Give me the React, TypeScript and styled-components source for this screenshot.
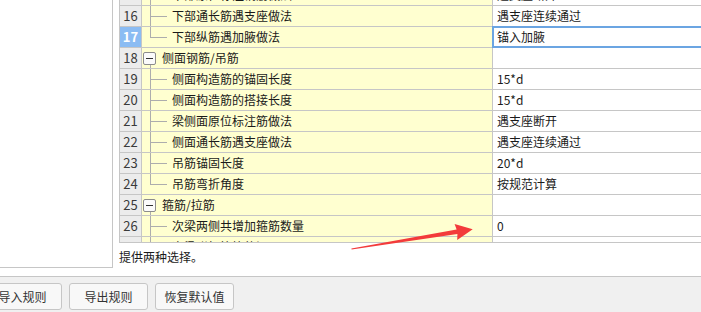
import * as React from 'react';
import styled, { createGlobalStyle, css } from 'styled-components';

const LINE_COLOR = '#c6c6c6';
const TREE_LINE = '#adadad';
const YELLOW = '#ffffd0';
const FONT = '"Noto Sans CJK SC", "Noto Sans", sans-serif';

const GlobalStyle = createGlobalStyle`
  html, body {
    margin: 0;
    padding: 0;
    background: #fff;
    overflow: hidden;
  }
  body {
    font-family: ${FONT};
    font-size: 12px;
    color: #1a1a1a;
  }
`;

const Page = styled.div`
  position: relative;
  width: 701px;
  height: 312px;
  display: flex;
  flex-direction: column;
  overflow: hidden;
`;

const Main = styled.div`
  display: flex;
  height: 277px;
  box-sizing: border-box;
  border-bottom: 1px solid ${LINE_COLOR};
`;

const LeftPanel = styled.div`
  width: 113px;
  height: 268px;
  box-sizing: border-box;
  background: #fff;
  border-right: 1px solid ${LINE_COLOR};
  border-bottom: 1px solid ${LINE_COLOR};
`;

const RightPane = styled.div`
  flex: 1;
  margin-left: 6px;
  display: flex;
  flex-direction: column;
  min-width: 0;
`;

const GridViewport = styled.div`
  position: relative;
  height: 243px;
  box-sizing: border-box;
  border-left: 1px solid ${LINE_COLOR};
  border-bottom: 1px solid ${LINE_COLOR};
  overflow: hidden;
`;

// scrolled so that row 15 is mostly out of view
const Rows = styled.div`
  margin-top: -15px;
`;

const Row = styled.div`
  display: flex;
  height: 21px;
  line-height: 20px;
`;

const NumCell = styled.div<{ $active?: boolean }>`
  width: 22px;
  flex: none;
  box-sizing: border-box;
  border-right: 1px solid ${LINE_COLOR};
  border-bottom: 1px solid ${LINE_COLOR};
  background: ${p => (p.$active ? '#8bbcf3' : '#ececec')};
  color: ${p => (p.$active ? '#fff' : '#3a3a3a')};
  font-weight: ${p => (p.$active ? 700 : 400)};
  font-size: 13px;
  text-align: center;
`;

type Kind = 'child' | 'last' | 'group';

const TreeCell = styled.div<{ $kind: Kind }>`
  position: relative;
  width: 351px;
  flex: none;
  box-sizing: border-box;
  border-right: 1px solid ${LINE_COLOR};
  border-bottom: 1px solid ${LINE_COLOR};
  background: ${YELLOW};
  padding-left: ${p => (p.$kind === 'group' ? 20 : 30)}px;
  white-space: nowrap;
  overflow: hidden;

  &::before {
    content: '';
    position: absolute;
    left: 8px;
    width: 1px;
    background: ${TREE_LINE};
    ${p =>
      p.$kind === 'child' &&
      css`
        top: 0;
        bottom: -1px;
      `}
    ${p =>
      p.$kind === 'last' &&
      css`
        top: 0;
        height: 10px;
      `}
    ${p =>
      p.$kind === 'group' &&
      css`
        top: 17px;
        bottom: -1px;
      `}
  }

  &::after {
    content: '';
    display: ${p => (p.$kind === 'group' ? 'none' : 'block')};
    position: absolute;
    left: 8px;
    top: 10px;
    width: 17px;
    height: 1px;
    background: ${TREE_LINE};
  }
`;

const Toggle = styled.span`
  position: absolute;
  left: 1px;
  top: 4px;
  width: 13px;
  height: 13px;
  box-sizing: border-box;
  border: 1px solid #8c8c8c;
  border-radius: 2px;
  background: #fbfbfb;

  &::after {
    content: '';
    position: absolute;
    left: 2px;
    right: 2px;
    top: 5px;
    height: 1px;
    background: #333;
  }
`;

const ValueCell = styled.div<{ $focused?: boolean }>`
  position: relative;
  flex: 1;
  box-sizing: border-box;
  border-bottom: 1px solid ${LINE_COLOR};
  background: #fff;
  padding-left: 4px;
  white-space: nowrap;

  ${p =>
    p.$focused &&
    css`
      &::after {
        content: '';
        position: absolute;
        left: -1px;
        right: -4px;
        top: -1px;
        bottom: -1px;
        border: 2px solid #6ba5e2;
      }
    `}
`;

const Hint = styled.div`
  margin-top: 6px;
  line-height: 16px;
  color: #1a1a1a;
`;

const BottomBar = styled.div`
  flex: 1;
  background: #f0f0f0;
  display: flex;
  gap: 7px;
  padding-top: 6px;
  margin-left: -17px;
`;

const Button = styled.button`
  width: 79px;
  height: 27px;
  box-sizing: border-box;
  border: 1px solid #c6c6c6;
  border-radius: 3px;
  background: #f8f8f8;
  font-family: ${FONT};
  font-size: 12px;
  color: #333;
  padding: 0;
`;

const Arrow = styled.svg`
  position: absolute;
  left: 350px;
  top: 220px;
  width: 126px;
  height: 32px;
  pointer-events: none;
`;

type Item = { no: number; label: string; value?: string; kind: Kind };

const items: Item[] = [
  { no: 15, label: '下部原位标注钢筋做法', value: '遇支座断开', kind: 'child' },
  { no: 16, label: '下部通长筋遇支座做法', value: '遇支座连续通过', kind: 'child' },
  { no: 17, label: '下部纵筋遇加腋做法', value: '锚入加腋', kind: 'last' },
  { no: 18, label: '侧面钢筋/吊筋', kind: 'group' },
  { no: 19, label: '侧面构造筋的锚固长度', value: '15*d', kind: 'child' },
  { no: 20, label: '侧面构造筋的搭接长度', value: '15*d', kind: 'child' },
  { no: 21, label: '梁侧面原位标注筋做法', value: '遇支座断开', kind: 'child' },
  { no: 22, label: '侧面通长筋遇支座做法', value: '遇支座连续通过', kind: 'child' },
  { no: 23, label: '吊筋锚固长度', value: '20*d', kind: 'child' },
  { no: 24, label: '吊筋弯折角度', value: '按规范计算', kind: 'last' },
  { no: 25, label: '箍筋/拉筋', kind: 'group' },
  { no: 26, label: '次梁两侧共增加箍筋数量', value: '0', kind: 'child' },
  { no: 27, label: '次梁附加箍筋的间距', value: '', kind: 'child' },
];

const ACTIVE_ROW = 17;

const App = () => (
  <Page>
    <GlobalStyle />
    <Main>
      <LeftPanel />
      <RightPane>
        <GridViewport>
          <Rows>
            {items.map(item => (
              <Row key={item.no}>
                <NumCell $active={item.no === ACTIVE_ROW}>{item.no}</NumCell>
                <TreeCell $kind={item.kind}>
                  {item.kind === 'group' && <Toggle />}
                  {item.label}
                </TreeCell>
                <ValueCell $focused={item.no === ACTIVE_ROW}>{item.value}</ValueCell>
              </Row>
            ))}
          </Rows>
        </GridViewport>
        <Hint>提供两种选择。</Hint>
      </RightPane>
    </Main>
    <BottomBar>
      <Button>导入规则</Button>
      <Button>导出规则</Button>
      <Button>恢复默认值</Button>
    </BottomBar>
    <Arrow viewBox="0 0 126 32">
      <polygon
        points="1.4,28.5 106.6,9.6 104.6,4.1 122.7,9.3 107.2,19.9 107.4,14 1.6,29.5"
        fill="#f33b3b"
      />
    </Arrow>
  </Page>
);

export default App;
